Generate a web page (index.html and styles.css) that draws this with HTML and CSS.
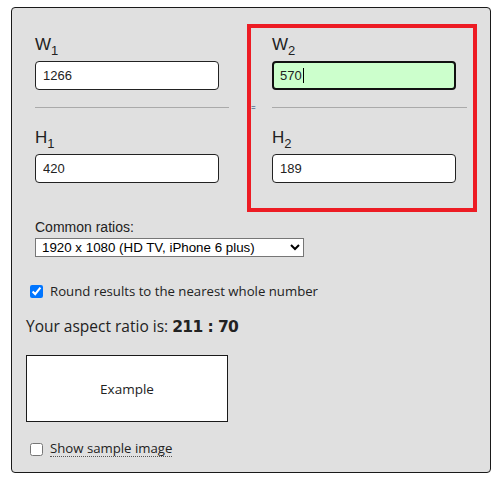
FILE: index.html
```html
<!DOCTYPE html>
<html>
<head>
<meta charset="utf-8">
<link rel="stylesheet" href="styles.css">
</head>
<body>
<div class="calc">
  <div class="pairs">
    <div class="col col-left">
      <label class="lbl">W<sub>1</sub></label>
      <input class="num" type="text" value="1266">
      <div class="sep"><span class="line"></span></div>
      <label class="lbl">H<sub>1</sub></label>
      <input class="num" type="text" value="420">
    </div>
    <div class="col col-right">
      <label class="lbl">W<sub>2</sub></label>
      <div class="num num-active">570<span class="caret"></span></div>
      <div class="sep sep-eq"><span class="eq">=</span><span class="line"></span></div>
      <label class="lbl">H<sub>2</sub></label>
      <input class="num" type="text" value="189">
    </div>
  </div>
  <div class="common">
    <div class="common-label">Common ratios:</div>
    <select class="ratios">
      <option>1920 x 1080 (HD TV, iPhone 6 plus)</option>
    </select>
  </div>
  <label class="check-row round-row"><input type="checkbox" checked><span>Round results to the nearest whole number</span></label>
  <div class="result">Your aspect ratio is: <b>211 : 70</b></div>
  <div class="example">Example</div>
  <label class="check-row sample-row"><input type="checkbox"><span class="dotted">Show sample image</span></label>
</div>
</body>
</html>
```

FILE: styles.css
```css
html, body {
  margin: 0;
  padding: 0;
  background: #ffffff;
}
.calc {
  box-sizing: border-box;
  margin: 7px 0 0 11px;
  width: 480px;
  height: 466px;
  background: #e0e0e0;
  border: 1px solid #1a1a1a;
  border-radius: 4px;
  padding: 16px 13px 0 0;
  display: flex;
  flex-direction: column;
  font-family: "Liberation Sans", Arial, sans-serif;
  color: #222;
}
.pairs {
  display: flex;
  justify-content: space-between;
}
.col {
  display: flex;
  flex-direction: column;
}
.col-left {
  padding: 11px 0 0 23px;
  width: 194px;
}
.col-right {
  box-sizing: border-box;
  width: 230px;
  height: 188px;
  border: 4px solid #ed1c24;
  padding: 7px 6px 0 21px;
}
.lbl {
  display: block;
  height: 26px;
  font-size: 17px;
  line-height: 20px;
  color: #222;
}
.lbl sub {
  font-size: 13px;
  line-height: 0;
  vertical-align: -5px;
}
.num {
  box-sizing: border-box;
  width: 184px;
  height: 29px;
  margin: 0;
  padding: 0 7px;
  border: 1px solid #222;
  border-radius: 4px;
  background: #fff;
  font-family: "Liberation Sans", Arial, sans-serif;
  font-size: 13px;
  color: #222;
  display: block;
}
.num-active {
  background: #ccffcc;
  border: 2px solid #111;
  padding: 0 6px;
  line-height: 25px;
  display: flex;
  align-items: center;
}
.caret {
  display: inline-block;
  width: 1px;
  height: 15px;
  background: #000;
  margin-left: 1px;
}
.sep {
  height: 1px;
  margin: 17px 0 20px;
  display: flex;
  align-items: center;
}
.sep .line {
  flex: 1;
  height: 1px;
  background: #aaa;
}
.sep-eq {
  margin-left: -21px;
}
.eq {
  width: 21px;
  font-size: 8px;
  line-height: 1px;
  color: #0b3d6b;
}
.common {
  padding-left: 23px;
  margin-top: 7px;
}
.common-label {
  font-size: 14px;
  line-height: 17px;
  color: #222;
}
.ratios {
  box-sizing: border-box;
  margin-top: 2px;
  width: 269px;
  height: 19px;
  font-family: "Liberation Sans", Arial, sans-serif;
  font-size: 13.33px;
  color: #000;
  background: #fff;
  border: 1px solid #767676;
  border-radius: 0;
  padding: 0 0 0 2px;
}
.check-row {
  display: flex;
  align-items: center;
  padding-left: 18px;
  font-family: "Open Sans", "Noto Sans", sans-serif;
  font-size: 13.2px;
  color: #222;
}
.check-row input {
  width: 13px;
  height: 13px;
  margin: 0 7px 0 0;
}
.round-row {
  margin-top: 26px;
  height: 16px;
}
.result {
  margin-top: 17px;
  padding-left: 14px;
  font-family: "Open Sans", "Noto Sans", sans-serif;
  font-size: 15.5px;
  line-height: 20px;
  color: #222;
}
.result b {
  font-family: "DejaVu Sans", sans-serif;
  font-size: 15.5px;
  font-weight: bold;
  letter-spacing: -0.6px;
}
.example {
  box-sizing: border-box;
  margin: 18px 0 0 14px;
  width: 202px;
  height: 67px;
  background: #fff;
  border: 1px solid #1a1a1a;
  display: flex;
  align-items: center;
  justify-content: center;
  font-family: "Open Sans", "Noto Sans", sans-serif;
  font-size: 13.5px;
  color: #222;
}
.sample-row {
  margin-top: 19px;
  height: 16px;
}
.dotted {
  border-bottom: 1px dotted #555;
  line-height: 15px;
}
```
